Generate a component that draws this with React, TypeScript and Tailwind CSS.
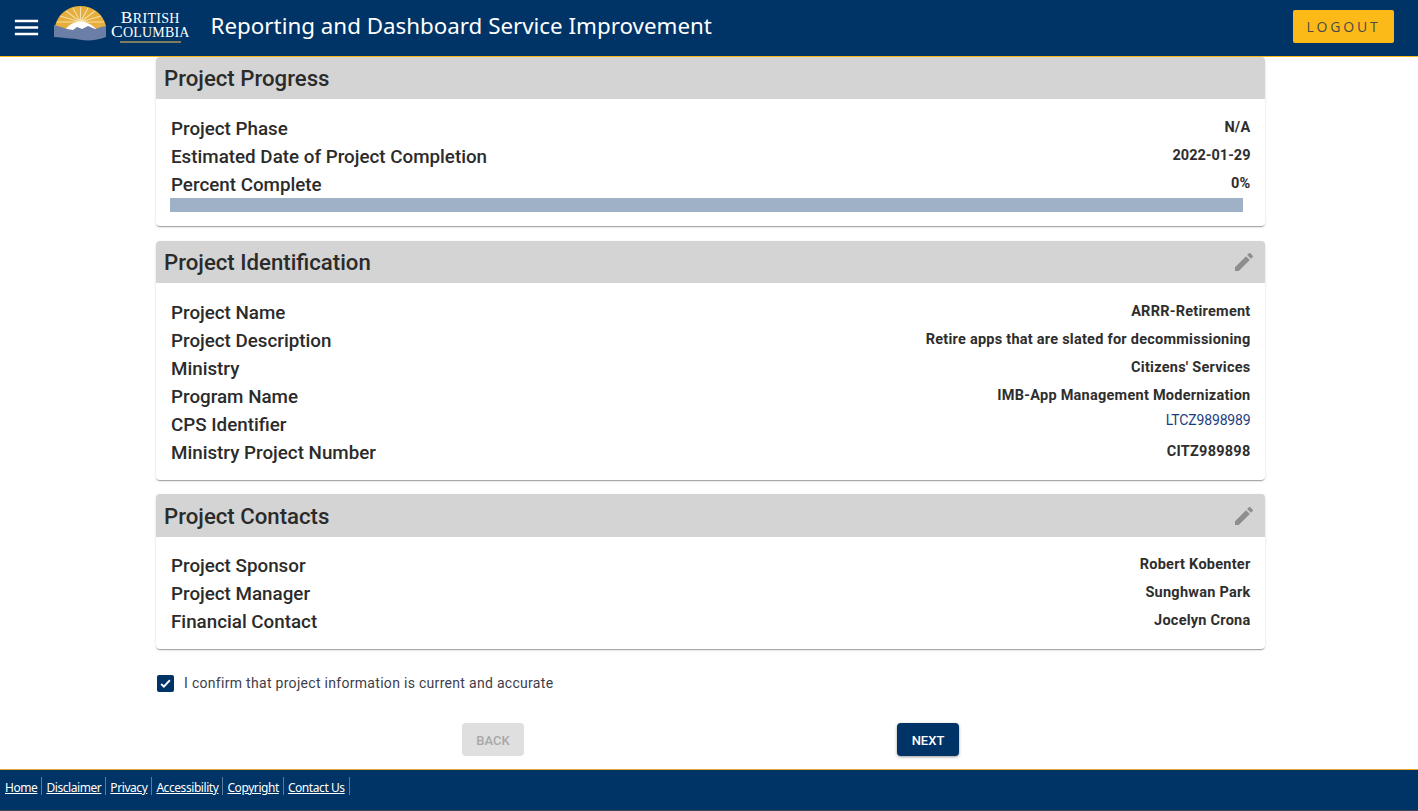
import type { ReactNode } from "react";

const footerLinks = ["Home", "Disclaimer", "Privacy", "Accessibility", "Copyright", "Contact Us"];

function BcLogo() {
  return (
    <div className="flex items-center">
      <svg width="54" height="36" viewBox="0 0 54 36" className="-mt-[9px] shrink-0">
        <path d="M1 20C4 7 15 0 26.500 0S49 7 52 20V24H1Z" fill="#e6ae3c" />
        <g stroke="#f5dfa8" strokeWidth="1.1">
          <path d="M26.500 16V1M26.500 16L19 2M26.500 16L34 2M26.500 16L12 5M26.500 16L41 5M26.500 16L6 10M26.500 16L47 10M26.500 16L3 16M26.500 16L50 16" />
        </g>
        <path d="M11 24C14 19 20 16 26.500 15.500C33 16 39 19 43 24Z" fill="#fff" />
        <path
          d="M0 19L7 21L13 23L19 24L23 21L28 23L34 20L41 23L47 21L52 20L52 31C44 34 36 35 28 34C18 32 8 32 0 31Z"
          fill="#6b7fa6"
        />
      </svg>
      <div className="ml-[3px] -mt-[2px] flex flex-col items-center font-['Liberation_Serif',serif] leading-none text-white">
        <span className="text-[17.500px] leading-[13px] tracking-[0.3px]">
          B<span className="text-[14px]">RITISH</span>
        </span>
        <span className="text-[17.500px] leading-[13px] tracking-[0.2px]">
          C<span className="text-[14px]">OLUMBIA</span>
        </span>
        <div className="mt-[2px] h-[2px] w-[61px] bg-[#7f7b5f]" />
      </div>
    </div>
  );
}

function Row({ label, children }: { label: string; children: ReactNode }) {
  return (
    <div className="flex h-[28px] items-start justify-between">
      <span className="pt-[2px] text-[18.800px] leading-[24px] font-medium text-[#2b2b2b]">{label}</span>
      <span className="-mr-[0.5px] pt-px text-[14.500px] leading-[24px] font-bold tracking-[0.25px] text-[#2e2e2e]">
        {children}
      </span>
    </div>
  );
}

function Card({
  title,
  editable,
  headerClass,
  children,
}: {
  title: string;
  editable?: boolean;
  headerClass: string;
  children: ReactNode;
}) {
  return (
    <section className="overflow-hidden rounded bg-white shadow-[0_2px_1px_-1px_rgba(0,0,0,0.2),0_1px_1px_0_rgba(0,0,0,0.14),0_1px_3px_0_rgba(0,0,0,0.12)]">
      <div className={`flex items-center justify-between bg-[#d4d4d4] pr-[9px] pl-2 ${headerClass}`}>
        <h2 className="text-[22.200px] leading-none font-medium text-[#2b2b2b]">{title}</h2>
        {editable && (
          <svg width="24" height="24" viewBox="0 0 24 24" fill="#8e8e8e">
            <path d="M3 17.250V21h3.750L17.810 9.940l-3.750-3.750L3 17.250zM20.710 7.040c.39-.39.39-1.020 0-1.410l-2.340-2.340c-.39-.39-1.020-.39-1.410 0l-1.830 1.830 3.750 3.750 1.830-1.830z" />
          </svg>
        )}
      </div>
      {children}
    </section>
  );
}

export default function App() {
  return (
    <div className="flex h-[811px] flex-col overflow-hidden bg-white font-['Roboto',sans-serif]">
      <header className="flex h-[57px] shrink-0 items-center border-b border-[#fcba19] bg-[#003366] pr-6 pl-[11px]">
        <svg width="31" height="31" viewBox="0 0 24 24" fill="#fff" className="mr-[12px] -mt-[1px] shrink-0">
          <path d="M3 18h18v-2H3v2zm0-5h18v-2H3v2zm0-5h18V6H3v2z" />
        </svg>
        <BcLogo />
        <h1 className="-mt-[4px] ml-[21px] flex-1 font-['Noto_Sans',sans-serif] text-[22.350px] leading-none text-white">
          Reporting and Dashboard Service Improvement
        </h1>
        <button className="-mt-[4px] h-[33px] w-[101px] rounded-[2px] bg-[#fcba19] font-['Open_Sans',sans-serif] text-[14px] tracking-[0.2em] text-[#4a4a4a]">
          LOGOUT
        </button>
      </header>

      <main className="ml-[156px] flex w-[1109px] flex-1 flex-col">
        <div className="flex flex-col">
          <Card title="Project Progress" headerClass="h-[42px]">
            <div className="px-[15px] pt-[16px] pb-[14px]">
              <Row label="Project Phase">N/A</Row>
              <Row label="Estimated Date of Project Completion">
                <span className="tracking-normal">2022-01-29</span>
              </Row>
              <Row label="Percent Complete">0%</Row>
              <div className="-mt-[1px] mr-[7px] -ml-[1px] h-[14px] bg-[#9fb1c6]" />
            </div>
          </Card>

          <div className="mt-[15px]">
            <Card title="Project Identification" editable headerClass="h-[42px]">
              <div className="px-[15px] pt-[16px] pb-[13px]">
                <Row label="Project Name">ARRR-Retirement</Row>
                <Row label="Project Description">Retire apps that are slated for decommissioning</Row>
                <Row label="Ministry">Citizens' Services</Row>
                <Row label="Program Name">IMB-App Management Modernization</Row>
                <Row label="CPS Identifier">
                  <a className="relative top-[-4px] text-[14px] font-normal tracking-[-0.15px] text-[#1a3e80]">
                    LTCZ9898989
                  </a>
                </Row>
                <Row label="Ministry Project Number">CITZ989898</Row>
              </div>
            </Card>
          </div>

          <div className="mt-[14px]">
            <Card title="Project Contacts" editable headerClass="h-[43px] pt-px">
              <div className="px-[15px] pt-[15px] pb-[13px]">
                <Row label="Project Sponsor">Robert Kobenter</Row>
                <Row label="Project Manager">Sunghwan Park</Row>
                <Row label="Financial Contact">Jocelyn Crona</Row>
              </div>
            </Card>
          </div>
        </div>

        <label className="mt-[25px] flex items-center">
          <span className="ml-px flex h-[17px] w-[17px] items-center justify-center rounded-[2px] bg-[#003366]">
            <svg width="13" height="13" viewBox="0 0 24 24" fill="none" stroke="#fff" strokeWidth="3.500">
              <path d="M4 13l5 5L20 6" />
            </svg>
          </span>
          <span className="ml-[10px] text-[14px] leading-[18px] tracking-[0.3px] text-[#3d3d4a]">
            I confirm that project information is current and accurate
          </span>
        </label>

        <div className="mt-[31px] flex">
          <button className="ml-[306px] h-[33px] w-[62px] rounded bg-[#dfdfdf] pt-[2px] text-[13px] font-medium text-[#a8a8a8]">
            BACK
          </button>
          <button className="ml-[373px] h-[33px] w-[62px] rounded bg-[#003366] pt-[2px] text-[13px] font-medium text-white shadow-[0_1px_3px_rgba(0,0,0,0.4)]">
            NEXT
          </button>
        </div>
      </main>

      <footer className="flex h-[42px] shrink-0 items-start border-t border-b border-t-[#e3a82b] border-b-[#3c4650] bg-[#003366] pt-[7px] pl-px">
        {footerLinks.map((link) => (
          <div key={link} className="flex h-[18px] items-center border-r border-[#5c7a99] px-1">
            <a className="relative top-[2px] font-['Noto_Sans',sans-serif] text-[12px] tracking-[-0.43px] text-white underline">
              {link}
            </a>
          </div>
        ))}
      </footer>
    </div>
  );
}
